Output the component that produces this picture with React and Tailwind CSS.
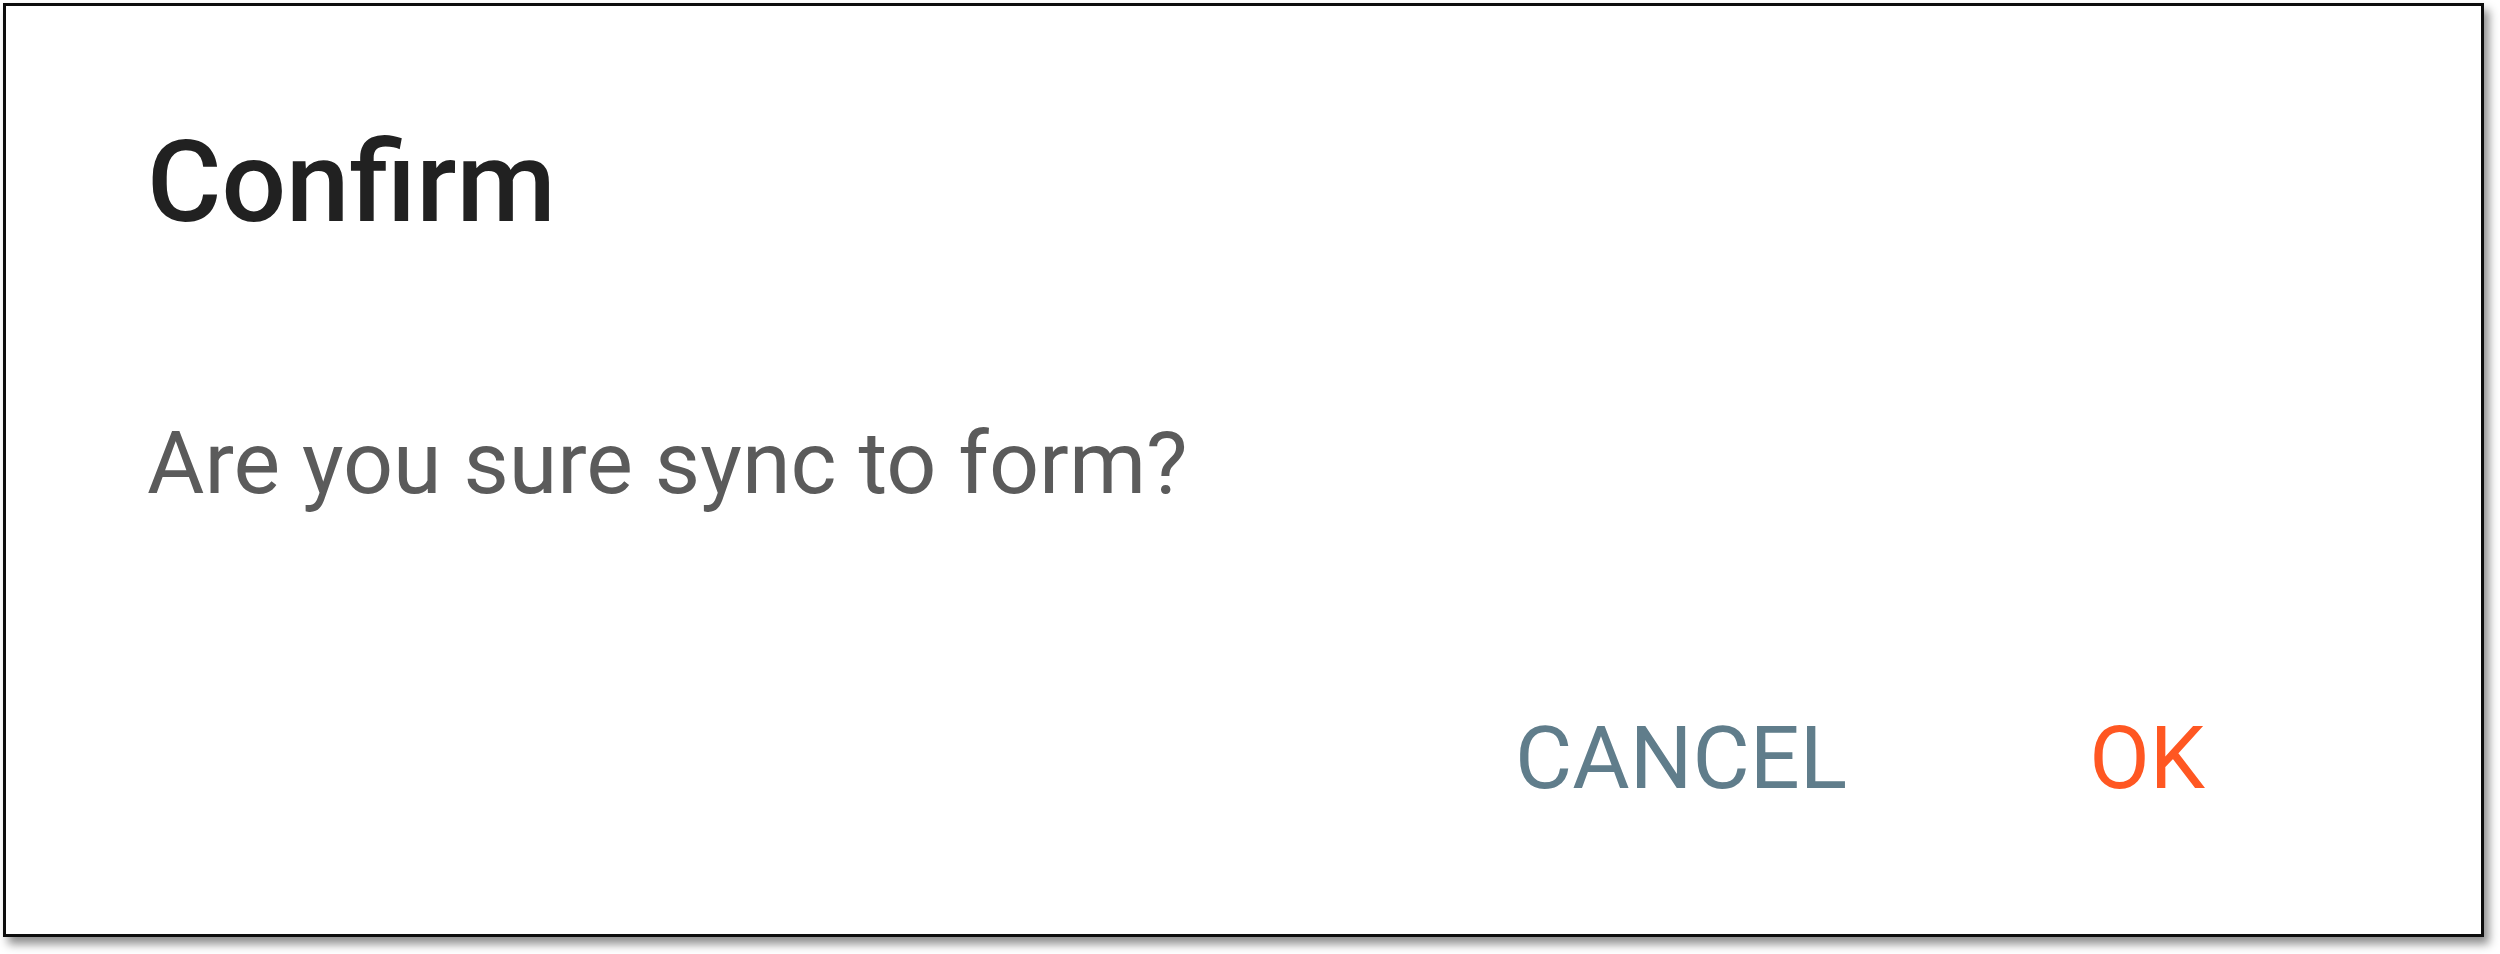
export default function App() {
  return (
    <div className="h-[954px] w-[2500px] bg-white pl-[3px] pt-[3px] font-['Roboto',sans-serif]">
      <ConfirmDialog
        title="Confirm"
        message="Are you sure sync to form?"
        onCancel={() => {}}
        onOk={() => {}}
      />
    </div>
  );
}

function ConfirmDialog({ title, message, onCancel, onOk }) {
  return (
    <div className="flex h-[934px] w-[2481px] flex-col border-[3px] border-[#0d0d0d] bg-white pl-[141px] pt-[119px] shadow-[5px_7px_9px_rgba(0,0,0,0.45)]">
      <h2 className="text-[114px] font-medium leading-none text-[#212121]">{title}</h2>
      <p className="mt-[180px] text-[88px] leading-none text-[#5b5b5b]">{message}</p>
      <div className="mt-[207px] flex justify-end gap-[242px] pr-[276px]">
        <button type="button" onClick={onCancel} className="text-[88px] uppercase leading-none text-[#607d8b]">
          Cancel
        </button>
        <button type="button" onClick={onOk} className="text-[88px] uppercase leading-none text-[#ff5722]">
          Ok
        </button>
      </div>
    </div>
  );
}
